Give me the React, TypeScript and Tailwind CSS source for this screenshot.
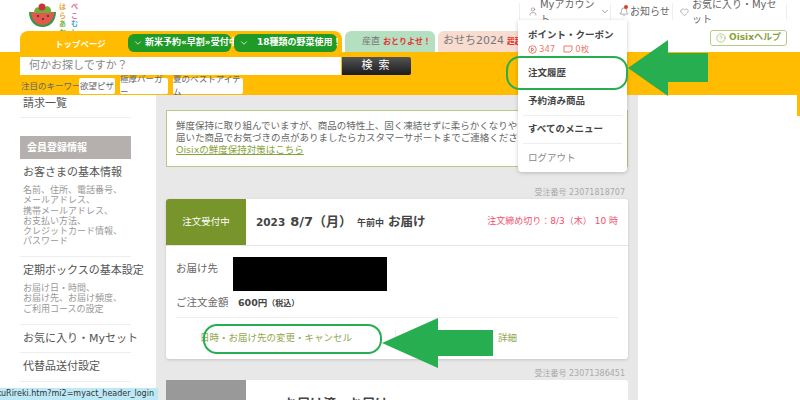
import { User, ChevronDown, Bell, Heart, CircleHelp, ChevronDown as Chev } from "lucide-react";

function Logo() {
  return (
    <div className="flex items-start ml-[28px] gap-[1px] pt-[2px]">
      <svg width="30" height="26" viewBox="0 0 30 26">
        <path d="M1 10 H28 C28 19 22 25 14.5 25 C7 25 1 19 1 10 Z" fill="#2e9a4a" />
        <path d="M3 10 H26 C26 17 21 23 14.5 23 C8 23 3 17 3 10 Z" fill="#e4574c" />
        <path d="M6 11 C6 6 9 4 11 6 C12 2 16 2 17 5 C20 3 24 6 23 11 Z" fill="#6eb03c" />
        <circle cx="14" cy="5" r="3.5" fill="#c9333a" />
        <circle cx="10" cy="14" r="1" fill="#333" />
        <circle cx="15" cy="17" r="1" fill="#333" />
        <circle cx="20" cy="14" r="1" fill="#333" />
      </svg>
      <div className="text-[7px] leading-[8.5px] font-bold mt-[1px] w-[24px]">
        <div className="flex"><span className="text-[#e9a23b]">はら</span><span className="text-[#e46a8a]">ぺこ</span></div>
        <div className="flex"><span className="text-[#7ab648]">あお</span><span className="text-[#4aa5d8]">むし</span></div>
        <div className="text-center text-[#555]">×</div>
        <div className="text-[#7a9a2c] text-[7.5px] tracking-[0.5px]">Oisix</div>
      </div>
    </div>
  );
}

function TopBar() {
  return (
    <header className="h-[30px] flex justify-between">
      <Logo />
      <nav className="flex items-start mt-[3px] mr-[13px] text-[10px] text-[#666]">
        <div className="w-[92px] h-[17px] flex items-center gap-[2px] pl-[8px] border-x border-[#eeeeee]">
          <User size={11} strokeWidth={1.2} />
          <span>Myアカウント</span>
          <ChevronDown size={11} strokeWidth={1.5} />
        </div>
        <div className="relative w-[62px] h-[17px] flex items-center gap-[1px] pl-[8px] border-r border-[#eeeeee]">
          <Bell size={10} strokeWidth={1.3} />
          <span className="absolute left-[13px] top-[2px] w-[4px] h-[4px] rounded-full bg-[#d9421c]" />
          <span>お知らせ</span>
        </div>
        <div className="w-[114px] h-[17px] flex items-center gap-[3px] pl-[7px] border-r border-[#eeeeee]">
          <Heart size={10} strokeWidth={1.2} />
          <span>お気に入り・Myセット</span>
        </div>
      </nav>
    </header>
  );
}

function GreenPill({ children, w }: { children: React.ReactNode; w: string }) {
  return (
    <div className={`${w} h-[18px] rounded-[6px] bg-[#1f9a27] text-white text-[9px] font-bold flex items-center pl-[5px] gap-[2px] whitespace-nowrap`}>
      <Chev size={10} strokeWidth={1.8} className="shrink-0" />
      {children}
    </div>
  );
}

function TabRow() {
  return (
    <div className="h-[22px] flex items-end pl-[20px] text-[9px] relative">
      <div className="w-[322px] h-[21px] bg-[#ffbc00] rounded-t-[8px] flex items-end pl-[108px] gap-[3px] relative">
        <span className="absolute left-[35px] top-[7px] text-white font-bold text-[8.5px]">トップページ</span>
        <div className="flex gap-[3px] mb-0">
          <GreenPill w="w-[103px]">新米予約«早割»受付中</GreenPill>
          <GreenPill w="w-[103px]"><span className="ml-[6px]">18種類の野菜使用！</span></GreenPill>
        </div>
      </div>
      <div className="ml-[3px] w-[90px] h-[21px] bg-[#b5dfc1] rounded-t-[6px] flex items-center pl-[17px] whitespace-nowrap text-[#777]">
        産直 <span className="text-[#e8322f] font-bold ml-[3px] text-[8px]">おとりよせ！</span>
      </div>
      <div className="ml-[3px] w-[90px] h-[21px] bg-[#f8dcd0] rounded-t-[6px] flex items-center pl-[5px] whitespace-nowrap overflow-hidden text-[#777]">
        <span className="text-[11px]">おせち2024</span>
        <span className="text-[#e8322f] font-bold ml-[3px] text-[7.5px]">超超早割</span>
      </div>
      <div className="ml-[182px] mb-[6px] w-[77px] h-[16px] bg-white border border-[#b5cb8a] rounded-[3px] flex items-center justify-center gap-[3px] text-[#86a23a] font-bold">
        <CircleHelp size={10} strokeWidth={1.3} />
        <span>Oisixヘルプ</span>
      </div>
    </div>
  );
}

function Band() {
  return (
    <div className="h-[43px] bg-[#ffbc00] pt-[5px] pl-[20px] mr-[3px]">
      <div className="flex h-[18px]">
        <div className="w-[321px] bg-white text-[#888] text-[11px] pl-[9px] flex items-center">何かお探しですか？</div>
        <div className="ml-[1px] w-[69px] bg-gradient-to-b from-[#555555] to-[#1c1c1c] rounded-r-[2px] text-white text-[11px] tracking-[6px] flex items-center justify-center pl-[4px]">検索</div>
      </div>
      <div className="flex items-center h-[16px] mt-[3px] text-[8.5px] text-[#666]">
        <span className="ml-[1px] w-[58px] whitespace-nowrap">注目のキーワード</span>
        <span className="w-[36px] h-[16px] bg-white rounded-[2px] flex items-center justify-center">欲望ピザ</span>
        <span className="ml-[5px] w-[48px] h-[16px] bg-white rounded-[2px] flex items-center justify-center">極厚バーガー</span>
        <span className="ml-[5px] w-[70px] h-[16px] bg-white rounded-[2px] flex items-center justify-center">夏のベストアイテム</span>
      </div>
    </div>
  );
}

function SideItem({ title, lines, h }: { title: string; lines?: string[]; h: string }) {
  return (
    <div className={`${h} border-b border-[#eeeeee] pl-[3px] pt-[7px]`}>
      <div className="text-[11px] leading-[14px] text-[#555] whitespace-nowrap">{title}</div>
      {lines && (
        <div className="mt-[5px] text-[9px] leading-[10.3px] text-[#999] whitespace-nowrap">
          {lines.map((l) => <div key={l}>{l}</div>)}
        </div>
      )}
    </div>
  );
}

function Sidebar() {
  return (
    <aside className="w-[156px] shrink-0 pl-[20px] pr-[25px] bg-white">
      <div className="h-[23px] pl-[3px] pt-[1px] border-b border-[#eeeeee] text-[11px] text-[#555]">請求一覧</div>
      <div className="mt-[18px] h-[23px] bg-[#b5b0ae] text-white text-[10px] font-bold flex items-center pl-[7px]">会員登録情報</div>
      <SideItem h="h-[98px]" title="お客さまの基本情報" lines={["名前、住所、電話番号、", "メールアドレス、", "携帯メールアドレス、", "お支払い方法、", "クレジットカード情報、", "パスワード"]} />
      <SideItem h="h-[68px]" title="定期ボックスの基本設定" lines={["お届け日・時間、", "お届け先、お届け頻度、", "ご利用コースの設定"]} />
      <SideItem h="h-[28px]" title="お気に入り・Myセット" />
      <SideItem h="h-[29px]" title="代替品送付設定" />
    </aside>
  );
}

function Card() {
  return (
    <div className="h-[160px] bg-white rounded-[3px] shadow-[0_1px_3px_rgba(0,0,0,0.15)] overflow-hidden">
      <div className="h-[47px] flex items-center border-b border-[#e5e5e5]">
        <div className="w-[80px] h-[46px] bg-[#78952c] text-white text-[9.5px] flex items-center justify-center">注文受付中</div>
        <div className="ml-[10px] flex items-baseline font-bold text-[#444] whitespace-nowrap">
          <span className="text-[10.5px]">2023</span>
          <span className="ml-[5px] text-[13px]">8/7（月）</span>
          <span className="ml-[5px] text-[9px]">午前中</span>
          <span className="ml-[4px] text-[12.5px]">お届け</span>
        </div>
        <div className="ml-auto mr-[10px] text-[9px] text-[#f0506e] whitespace-nowrap">注文締め切り：8/3（木） 10 時</div>
      </div>
      <div className="mx-[10px] h-[72px] border-b border-[#eeeeee] relative text-[10.5px] text-[#666]">
        <span className="absolute left-0 top-[15px]">お届け先</span>
        <div className="absolute left-[57px] top-[11px] w-[154px] h-[34px] bg-black" />
        <span className="absolute left-0 top-[49px]">ご注文金額</span>
        <span className="absolute left-[62px] top-[50px] font-bold text-[#444] text-[9.5px]">600円<span className="text-[8px]">（税込）</span></span>
      </div>
      <div className="flex items-center h-[40px] text-[9.5px] text-[#93a84f]">
        <div className="w-[230px] h-[17px] flex items-center justify-end pr-[43px] border-r border-[#eeeeee] whitespace-nowrap">日時・お届け先の変更・キャンセル</div>
        <div className="ml-[102px]">詳細</div>
      </div>
    </div>
  );
}

function MainPanel() {
  return (
    <main className="w-[482px] shrink-0 bg-[#e8e8e8] px-[10px] pt-[15px] text-[#666]">
      <div className="h-[57px] bg-white border border-[#b5cb8a] pl-[9px] pt-[9px] text-[9.5px] leading-[12px] whitespace-nowrap overflow-hidden">
        <div>鮮度保持に取り組んでいますが、商品の特性上、固く凍結せずに柔らかくなりやすい商品もございます。</div>
        <div>届いた商品でお気づきの点がありましたらカスタマーサポートまでご連絡ください。</div>
        <div className="text-[#86a23a] underline">Oisixの鮮度保持対策はこちら</div>
      </div>
      <div className="mt-[19px] h-[13px] text-right pr-[3px] text-[8px] leading-[13px] text-[#aaa]">受注番号 23071818707</div>
      <Card />
      <div className="mt-[8px] h-[13px] text-right pr-[3px] text-[8px] leading-[13px] text-[#aaa]">受注番号 23071386451</div>
      <div className="h-[40px] bg-white rounded-t-[3px] flex">
        <div className="w-[80px] h-[40px] bg-[#999999]" />
        <div className="ml-[38px] mt-[14px] font-bold text-[#444] text-[13px] whitespace-nowrap">お届け済　お届け</div>
      </div>
    </main>
  );
}

function AccountMenu() {
  return (
    <div className="absolute left-[518px] top-[20px] w-[109px] h-[152px] bg-white rounded-b-[4px] shadow-[0_1px_4px_rgba(0,0,0,0.2)] px-[5px] text-[#444] text-[9.5px] font-bold">
      <div className="h-[38px] pl-[5px] pt-[9px] leading-[12px]">
        <div className="whitespace-nowrap">ポイント・クーポン</div>
        <div className="flex items-center mt-[2px] text-[8.5px] font-normal text-[#ee7b6a]">
          <svg width="9" height="9" viewBox="0 0 9 9" fill="none" stroke="#ee7b6a"><circle cx="4.5" cy="4.5" r="3.8" /><path d="M3.5 2.8 L6 4.5 L3.5 6.2 Z" /></svg>
          <span className="ml-[2px]">347</span>
          <svg className="ml-[8px]" width="10" height="8" viewBox="0 0 10 8" fill="none" stroke="#ee7b6a"><path d="M1 1 H9 V5 L7 7 H1 Z" /></svg>
          <span className="ml-[2px]">0枚</span>
        </div>
      </div>
      <div className="h-[29px] pl-[5px] flex items-center mt-[1px]">注文履歴</div>
      <div className="h-[28px] pl-[5px] flex items-center border-b border-[#eeeeee]">予約済み商品</div>
      <div className="h-[28px] pl-[5px] flex items-center border-b border-[#eeeeee]">すべてのメニュー</div>
      <div className="h-[28px] pl-[5px] flex items-center text-[#888] font-normal">ログアウト</div>
    </div>
  );
}

function Annotations() {
  return (
    <>
      <div className="absolute left-[506px] top-[56px] w-[122px] h-[34px] border-2 border-[#27ae50] rounded-[14px]" />
      <svg className="absolute left-[620px] top-[30px]" width="100" height="75" viewBox="620 30 100 75">
        <polygon points="628,68 668,40 668,53 708,53 708,82 668,82 668,96" fill="#27ae50" />
      </svg>
      <div className="absolute left-[203px] top-[324px] w-[179px] h-[30px] border-2 border-[#27ae50] rounded-[14px]" />
      <svg className="absolute left-[375px] top-[310px]" width="125" height="65" viewBox="375 310 125 65">
        <polygon points="382,343 438,318 438,330 493,330 493,356 438,356 438,368" fill="#27ae50" />
      </svg>
    </>
  );
}

export default function App() {
  return (
    <div className="relative w-[800px] h-[400px] overflow-hidden bg-white [font-family:'DejaVu_Sans','Noto_Sans_CJK_JP',sans-serif]">
      <TopBar />
      <TabRow />
      <Band />
      <div className="flex h-[305px] overflow-hidden">
        <Sidebar />
        <MainPanel />
      </div>
      <div className="absolute left-[797px] top-[52px] w-[3px] h-[64px] bg-[#ffbc00]" />
      <AccountMenu />
      <Annotations />
      <div className="absolute left-0 bottom-0 w-[158px] h-[12px] bg-[#bde8f5] text-[8px] leading-[12px] text-[#333] whitespace-nowrap overflow-hidden flex justify-end pr-[4px]">
        <span>om/YoyakuRireki.htm?mi2=myact_header_login</span>
      </div>
    </div>
  );
}
